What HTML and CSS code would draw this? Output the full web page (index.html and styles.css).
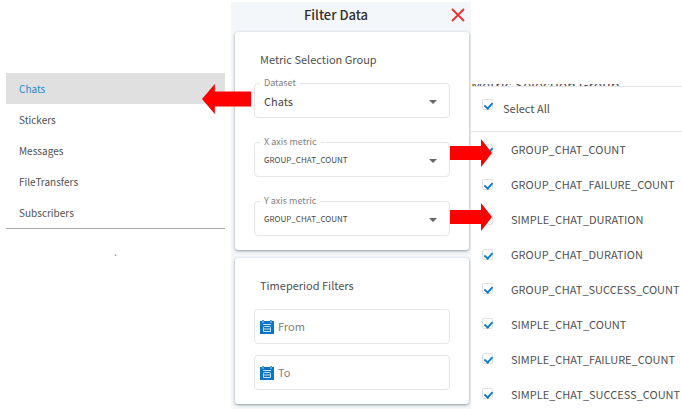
FILE: index.html
```html
<!DOCTYPE html>
<html lang="en">
<head>
<meta charset="utf-8">
<title>Filter Data</title>
<link rel="stylesheet" href="styles.css">
</head>
<body>
<svg class="defs" aria-hidden="true">
  <symbol id="arrow" viewBox="0 0 42 28" preserveAspectRatio="none"><path d="M0 7H31V0L42 14L31 28V21H0Z" fill="#f00"/></symbol>
  <symbol id="calendar" viewBox="0 0 14 14">
    <path d="M0 1H2V0H4V1H10V0H12V1H14V14H0Z" fill="#0b74c4"/>
    <path d="M3 0V3M11 0V3" stroke="#a9d2ee" fill="none"/>
    <path d="M3 4.500H11M3.500 11.500V7.500Q3.500 6.500 4.500 6.500H9.500Q10.500 6.500 10.500 7.500V11.500ZM3.500 9H10.500" stroke="#c5e1f4" fill="none"/>
  </symbol>
</svg>
<main class="board">
  <nav class="datasets">
    <ul class="menu">
      <li><a class="option selected" href="#">Chats</a></li>
      <li><a class="option" href="#">Stickers</a></li>
      <li><a class="option" href="#">Messages</a></li>
      <li><a class="option" href="#">FileTransfers</a></li>
      <li><a class="option" href="#">Subscribers</a></li>
    </ul>
    <span class="dot">.</span>
  </nav>

  <section class="filters">
    <header class="bar">
      <h1 class="title">Filter Data</h1>
      <button class="close" type="button" aria-label="Close">
        <svg viewBox="0 0 14 14" width="14" height="14"><path d="M1 1L13 13M13 1L1 13" stroke="#ee2e2e" stroke-width="1.800" fill="none"/></svg>
      </button>
    </header>
    <div class="card">
      <h2 class="heading">Metric Selection Group</h2>
      <div class="field">
        <label class="label" for="dataset">Dataset</label>
        <select class="control large" id="dataset"><option>Chats</option></select>
        <svg class="arrow back"><use href="#arrow"/></svg>
      </div>
      <div class="field">
        <label class="label" for="xaxis">X axis metric</label>
        <select class="control" id="xaxis"><option>GROUP_CHAT_COUNT</option></select>
        <svg class="arrow"><use href="#arrow"/></svg>
      </div>
      <div class="field">
        <label class="label" for="yaxis">Y axis metric</label>
        <select class="control" id="yaxis"><option>GROUP_CHAT_COUNT</option></select>
        <svg class="arrow lower"><use href="#arrow"/></svg>
      </div>
    </div>
    <div class="card">
      <h2 class="heading">Timeperiod Filters</h2>
      <div class="date">
        <svg class="calendar"><use href="#calendar"/></svg>
        <input class="when" type="text" placeholder="From" aria-label="From">
      </div>
      <div class="date">
        <svg class="calendar"><use href="#calendar"/></svg>
        <input class="when" type="text" placeholder="To" aria-label="To">
      </div>
    </div>
  </section>

  <section class="choices">
    <div class="behind"><span class="behind-text">Metric Selection Group</span></div>
    <label class="all"><input class="tick" type="checkbox" checked>Select All</label>
    <div class="list">
      <label class="choice"><input class="tick" type="checkbox" checked>GROUP_CHAT_COUNT</label>
      <label class="choice"><input class="tick" type="checkbox" checked>GROUP_CHAT_FAILURE_COUNT</label>
      <label class="choice"><input class="tick" type="checkbox">SIMPLE_CHAT_DURATION</label>
      <label class="choice"><input class="tick" type="checkbox" checked>GROUP_CHAT_DURATION</label>
      <label class="choice"><input class="tick" type="checkbox" checked>GROUP_CHAT_SUCCESS_COUNT</label>
      <label class="choice"><input class="tick" type="checkbox" checked>SIMPLE_CHAT_COUNT</label>
      <label class="choice"><input class="tick" type="checkbox" checked>SIMPLE_CHAT_FAILURE_COUNT</label>
      <label class="choice"><input class="tick" type="checkbox" checked>SIMPLE_CHAT_SUCCESS_COUNT</label>
    </div>
  </section>
</main>
</body>
</html>
```
FILE: styles.css
```css
* { box-sizing: border-box; }
body {
  margin: 0;
  background: #fff;
  color: #505050;
  font-family: "Noto Sans CJK SC", "Open Sans", sans-serif;
  font-size: 11px;
  overflow: hidden;
}
.defs { display: none; }
.board {
  display: grid;
  grid-template-columns: 231fr 240fr 211fr;
  min-height: 100vh;
}

.datasets { padding: 73px 6px 0; }
.menu {
  margin: 0;
  padding: 0;
  list-style: none;
  border-bottom: 1px solid #a8a8a8;
}
.option {
  display: block;
  padding-left: 13px;
  font-size: 10px;
  line-height: 31px;
  color: inherit;
  text-decoration: none;
}
.selected { background: #e0e0e0; color: #2a8acb; }
.dot { display: block; text-align: center; line-height: 44px; color: #888; }

.filters {
  margin-top: 2px;
  padding: 0 2px 4px 4px;
  background: #f3f7fa;
}
.bar {
  display: grid;
  grid-template-columns: 1fr 32px;
  align-items: center;
  height: 30px;
  padding-bottom: 4px;
}
.title {
  margin: 0;
  text-align: center;
  font-size: 13px;
  font-weight: 500;
  line-height: 20px;
  color: #303030;
}
.close {
  display: flex;
  justify-self: end;
  padding: 0 4px 0 0;
  border: 0;
  background: none;
}
.card {
  padding: 0 19px 14px;
  border-radius: 3px;
  background: #fff;
  box-shadow: 0 1px 3px #8c98a0;
}
.card + .card { margin-top: 8px; }
.heading {
  margin: 0;
  padding: 17px 6px 14px;
  font-size: 11px;
  font-weight: 400;
  line-height: 20px;
}
.field { position: relative; }
.field + .field { margin-top: 24px; }
.label {
  position: absolute;
  top: -6px;
  left: 6px;
  padding: 0 4px;
  background: #fff;
  font-size: 9px;
  line-height: 12px;
  color: #808080;
}
.control {
  display: block;
  width: 100%;
  height: 35px;
  padding: 0 9px;
  border: 1px solid #e6e6e6;
  border-radius: 4px;
  appearance: none;
  background: #fff;
  color: #484848;
  font-family: inherit;
  font-size: 8px;
}
.large { font-size: 11px; }
.field::after {
  content: "";
  position: absolute;
  top: 17px;
  right: 13px;
  border: 4px solid transparent;
  border-top-color: #666;
  border-bottom: 0;
}
.arrow {
  position: absolute;
  z-index: 1;
  top: -3px;
  left: 100%;
  width: 42px;
  height: 28px;
}
.lower { top: 2px; }
.back {
  top: 1px;
  right: 100%;
  left: auto;
  width: 49px;
  height: 30px;
  margin-right: 3px;
  transform: rotate(180deg);
}
.date {
  display: flex;
  align-items: center;
  gap: 4px;
  height: 35px;
  padding: 0 5px;
  border: 1px solid #e6e6e6;
  border-radius: 4px;
}
.date + .date { margin-top: 11px; }
.calendar { flex: none; width: 14px; height: 14px; }
.when {
  flex: 1;
  min-width: 0;
  padding: 0 0 2px;
  border: 0;
  background: none;
  font: inherit;
}
.when::placeholder { color: #808080; }

.choices { padding-top: 84px; }
.behind {
  display: flex;
  align-items: center;
  height: 3px;
  overflow: hidden;
  border-bottom: 1px solid #e6e6e6;
}
.behind-text { font-size: 14px; line-height: 20px; white-space: nowrap; }
.all {
  display: flex;
  align-items: center;
  gap: 10px;
  height: 45px;
  padding: 0 0 3px 11px;
  border-bottom: 1px solid #e6e6e6;
}
.all .tick { margin-bottom: 6px; }
.list {
  display: grid;
  grid-auto-rows: 1fr;
  min-height: 279px;
  padding-left: 11px;
}
.choice { display: flex; align-items: center; gap: 18px; white-space: nowrap; }
.tick {
  flex: none;
  width: 11px;
  height: 11px;
  margin: 0;
  border: 1px solid #e0e0e0;
  border-radius: 2px;
  appearance: none;
  background: #fff;
}
.tick:checked::before {
  content: "";
  display: block;
  width: 7px;
  height: 4px;
  margin: 2px 1px;
  border: solid #0b78c8;
  border-width: 0 0 2px 2px;
  transform: rotate(-48deg) scale(0.9);
}
```
